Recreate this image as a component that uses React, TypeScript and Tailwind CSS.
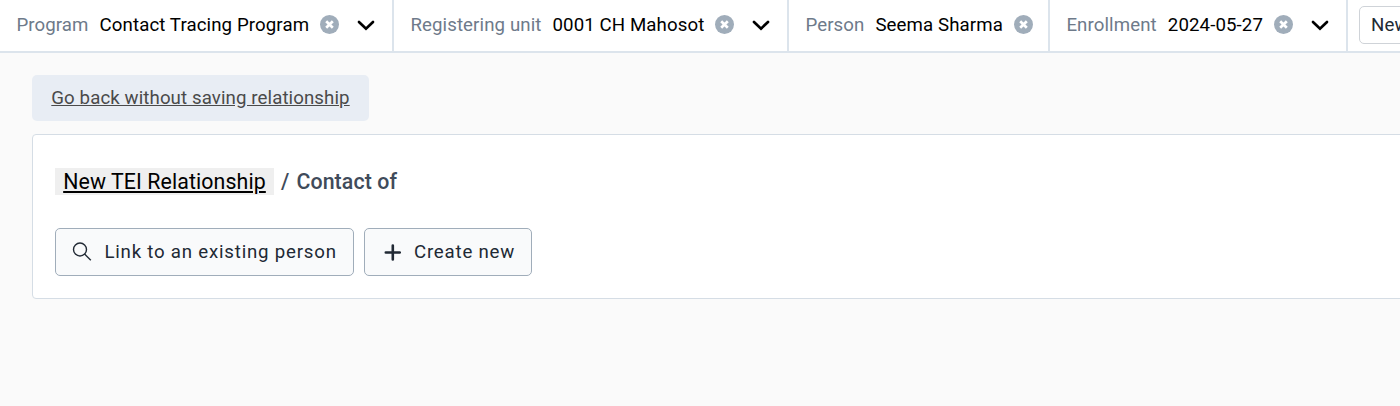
import React from "react";

function ClearIcon() {
  return (
    <svg className="ml-[11px] size-[19px] shrink-0 -translate-y-px" viewBox="0 0 19 19">
      <circle cx="9.5" cy="9.5" r="9.5" fill="#a0adba" />
      <path d="M6.2 6.2l6.6 6.6M12.8 6.2l-6.6 6.6" stroke="#fff" strokeWidth="2.7" fill="none" />
    </svg>
  );
}

function Chevron() {
  return (
    <svg className="ml-[18px] h-[11px] w-[18px] shrink-0" viewBox="0 0 18 11" fill="none">
      <path d="M2 2l7 6.7L16 2" stroke="#000" strokeWidth="2.7" strokeLinecap="round" />
    </svg>
  );
}

type SelectorProps = { label: string; value: string; width: string; menu?: boolean };

function Selector({ label, value, width, menu }: SelectorProps) {
  return (
    <div className={`flex h-full shrink-0 items-center border-r-2 border-[#dce4ec] pb-[1px] pl-[16.4px] whitespace-nowrap ${width}`}>
      <span className="text-[#6e7a8a]">{label}</span>
      <span className="ml-[11px] text-black">{value}</span>
      <ClearIcon />
      {menu && <Chevron />}
    </div>
  );
}

export default function App() {
  return (
    <div className="h-[406px] w-full overflow-hidden bg-[#fafafa] font-['Roboto',sans-serif] text-[18.667px] leading-6 tracking-[0.1px]">
      <header className="flex h-[53px] overflow-hidden border-b-2 border-[#dce4ec] bg-white">
        <Selector label="Program" value="Contact Tracing Program" width="w-[394px]" menu />
        <Selector label="Registering unit" value="0001 CH Mahosot" width="w-[395px]" menu />
        <Selector label="Person" value="Seema Sharma" width="w-[261px]" />
        <Selector label="Enrollment" value="2024-05-27" width="w-[298px]" menu />
        <button className="mt-[6px] ml-[11px] h-[38px] shrink-0 rounded-[5px] border border-[#cfd3d8] bg-white px-[11px] whitespace-nowrap text-[#212934]">
          New Event
        </button>
      </header>
      <main className="pt-[22px] pl-8">
        <button className="block h-[46px] w-[337px] rounded-[5px] bg-[#e8edf4] text-[#4a4a4a] underline">
          Go back without saving relationship
        </button>
        <section className="mt-[13px] h-[165px] w-[1500px] rounded-[4px] border border-[#d5dde5] bg-white px-[22px] pt-[33px]">
          <div className="flex h-[27px] items-center text-[21.333px] font-medium text-[#404b5a]">
            <button className="h-[27px] w-[219px] bg-[#efefef] font-normal text-black underline">
              New TEI Relationship
            </button>
            <span className="ml-[7px]">/</span>
            <span className="ml-[7px]">Contact of</span>
          </div>
          <div className="mt-[33px] flex gap-[10px] tracking-[0.79px] text-[#212934]">
            <button className="flex h-12 w-[299px] items-center rounded-[5px] border border-[#a0adba] bg-[#f9fafb] pl-[16.4px] whitespace-nowrap">
              <svg className="mr-[11px] size-[21px] shrink-0" viewBox="0 0 21 21" fill="none" stroke="#212934" strokeWidth="1.4">
                <circle cx="8" cy="7.5" r="6.5" />
                <path d="M12.6 12.1l6.2 6.2" />
              </svg>
              Link to an existing person
            </button>
            <button className="flex h-12 w-[168px] items-center rounded-[5px] border border-[#a0adba] bg-[#f9fafb] pl-[19px] whitespace-nowrap">
              <svg className="mr-[13px] size-[17px] shrink-0" viewBox="0 0 17 17" fill="none" stroke="#212934" strokeWidth="2.6" strokeLinecap="round">
                <path d="M8.8 1.5v14M1.8 8.5h14" />
              </svg>
              Create new
            </button>
          </div>
        </section>
      </main>
    </div>
  );
}
